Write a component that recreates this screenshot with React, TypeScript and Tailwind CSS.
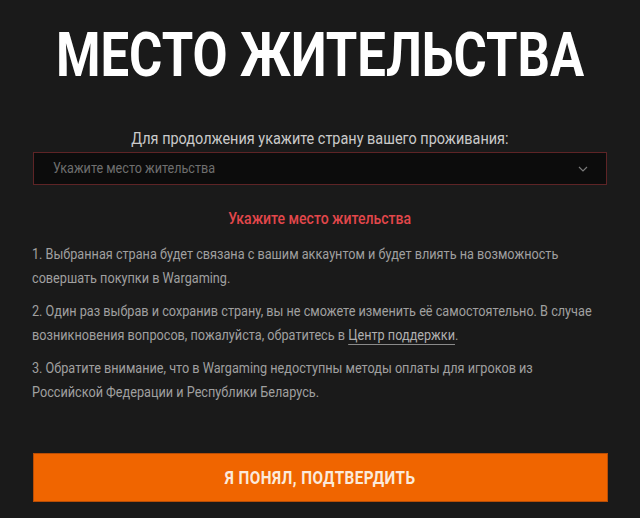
import React from "react";

const font = { fontFamily: "Roboto, 'Noto Sans', sans-serif" };

function ChevronDown() {
  return (
    <svg width="10" height="6" viewBox="0 0 10 6" fill="none">
      <path d="M1 1l4 4 4-4" stroke="#7a7a7a" strokeWidth="1.2" />
    </svg>
  );
}

export default function App() {
  return (
    <div
      className="w-[640px] h-[518px] bg-[#1a1a1a] text-white overflow-hidden flex flex-col items-center"
      style={font}
    >
      <h1 className="mt-[24px] h-[62px] text-[62px] leading-[62px] font-bold text-white whitespace-nowrap scale-x-[0.82] origin-center">
        МЕСТО ЖИТЕЛЬСТВА
      </h1>

      <p className="mt-[42px] text-[17px] leading-[20px] text-[#cacaca] whitespace-nowrap scale-x-[0.85] origin-center">
        Для продолжения укажите страну вашего проживания:
      </p>

      <div className="mt-[4px] w-[574px] h-[33px] border border-[#5e2426] bg-[#0c0c0c] flex items-center justify-between pl-[19px] pr-[18px]">
        <span className="text-[15px] text-[#6f6f6f] whitespace-nowrap scale-x-[0.84] origin-left">
          Укажите место жительства
        </span>
        <ChevronDown />
      </div>

      <p className="mt-[24px] text-[16.5px] leading-[20px] font-medium text-[#e2474b] whitespace-nowrap scale-x-[0.85] origin-center">
        Укажите место жительства
      </p>

      <div className="mt-[13px] w-[574px] self-start ml-[32px]">
        <div className="w-[679px] scale-x-[0.845] origin-left flex flex-col gap-[9px] text-[15px] leading-[24px] text-[#a0a0a0]">
          <p>
            1. Выбранная страна будет связана с вашим аккаунтом и будет влиять на возможность
            совершать покупки в Wargaming.
          </p>
          <p>
            2. Один раз выбрав и сохранив страну, вы не сможете изменить её самостоятельно. В случае
            возникновения вопросов, пожалуйста, обратитесь в{" "}
            <a className="text-[#b0b0b0] underline underline-offset-[4px] decoration-[#8a8a8a]">
              Центр поддержки
            </a>
            .
          </p>
          <p>
            3. Обратите внимание, что в Wargaming недоступны методы оплаты для игроков из
            Российской Федерации и Республики Беларусь.
          </p>
        </div>
      </div>

      <button className="mt-auto mb-[16px] w-[575px] h-[49px] bg-[#f06500] border border-[#b84d06] flex items-center justify-center">
        <span className="text-[18px] font-bold tracking-[0.5px] text-[#fbeadb] whitespace-nowrap scale-x-[0.85] origin-center">
          Я ПОНЯЛ, ПОДТВЕРДИТЬ
        </span>
      </button>
    </div>
  );
}
